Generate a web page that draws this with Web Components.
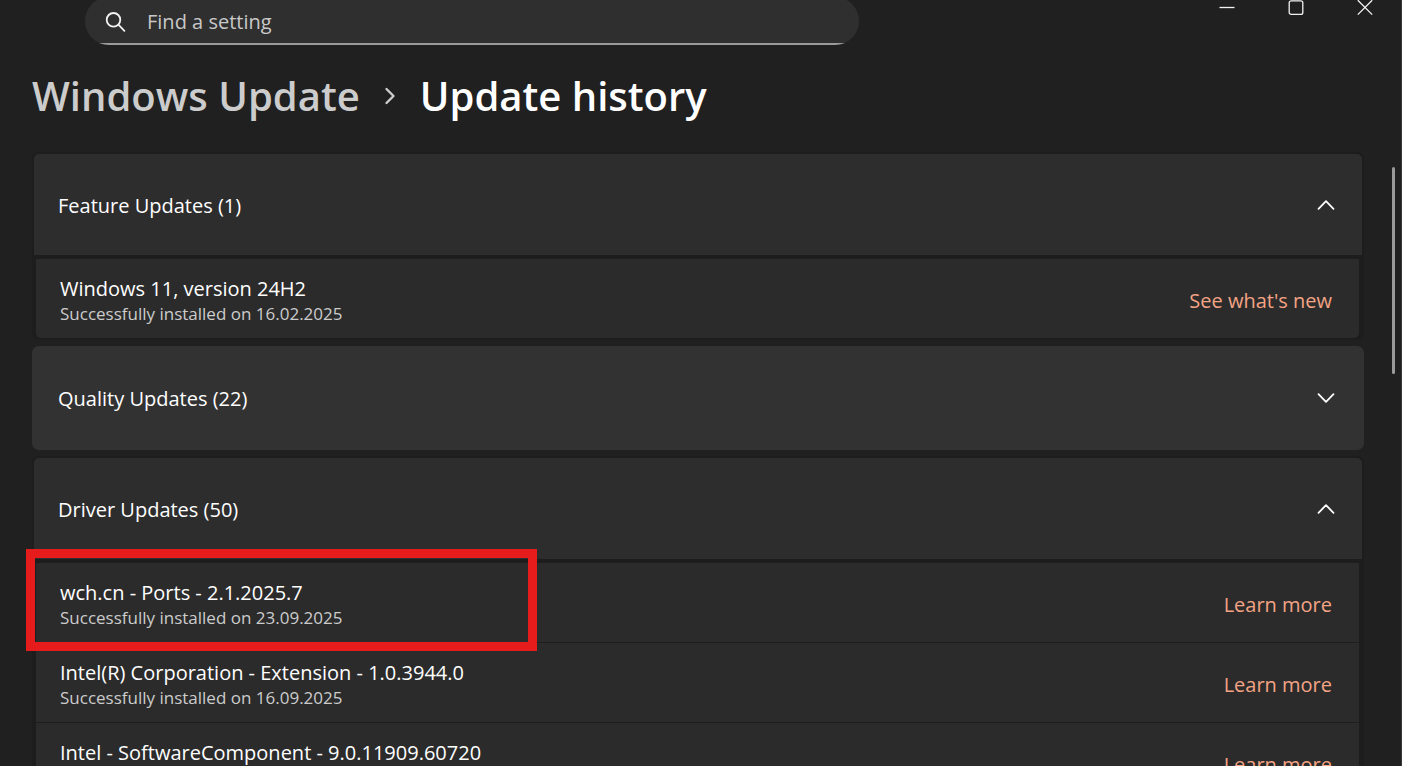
<!DOCTYPE html>
<html lang="en">
<head>
<meta charset="utf-8">
<meta name="viewport" content="width=device-width, initial-scale=1">
<title>Update history</title>
<style>
  :root {
    --color-window: #202020;
    --color-groove: #1d1d1d;
    --color-header: #2d2d2d;
    --color-hover: #323232;
    --color-row: #2b2b2b;
    --color-text: #ffffff;
    --color-muted: #cccccc;
    --color-link: #f4a384;
    --color-mark: #e61b1b;
    --font-family-base: "Open Sans", "Noto Sans", sans-serif;
  }

  body {
    margin: 0;
    background: var(--color-window);
    color: var(--color-text);
    font-family: var(--font-family-base);
  }
</style>
</head>
<body>

<settings-window>
  <settings-titlebar slot="titlebar"></settings-titlebar>
  <page-heading slot="heading" parent="Windows Update">Update history</page-heading>

  <update-group label="Feature Updates (1)" open>
    <update-item name="Windows 11, version 24H2" status="Successfully installed on 16.02.2025" action="See what's new"></update-item>
  </update-group>

  <update-group label="Quality Updates (22)"></update-group>

  <update-group label="Driver Updates (50)" open>
    <update-item name="wch.cn - Ports - 2.1.2025.7" status="Successfully installed on 23.09.2025" action="Learn more" marked></update-item>
    <update-item name="Intel(R) Corporation - Extension - 1.0.3944.0" status="Successfully installed on 16.09.2025" action="Learn more"></update-item>
    <update-item name="Intel - SoftwareComponent - 9.0.11909.60720" action="Learn more"></update-item>
  </update-group>
</settings-window>

<script>
function makeTemplate(html) {
  const template = document.createElement("template");
  template.innerHTML = html;
  return template;
}

const windowTemplate = makeTemplate(`
<style>
  :host {
    display: flex;
    flex-direction: column;
    position: relative;
    box-sizing: border-box;
    height: 100vh;
    overflow: hidden;
    border-right: 1px solid #383838;
  }

  main {
    display: flex;
    flex: 1;
    flex-direction: column;
    gap: 6px;
    min-height: 0;
    padding: 0 37px 0 32px;
    overflow: hidden;
  }

  ::slotted(*) {
    flex-shrink: 0;
  }

  .thumb {
    position: absolute;
    top: 167px;
    right: 6px;
    width: 3px;
    height: 207px;
    border-radius: 2px;
    background: #9a9a9a;
  }
</style>

<slot name="titlebar"></slot>
<slot name="heading"></slot>
<main><slot></slot></main>
<div class="thumb"></div>
`);

class SettingsWindow extends HTMLElement {
  constructor() {
    super();
    this.attachShadow({ mode: "open" });
    this.shadowRoot.append(windowTemplate.content.cloneNode(true));
  }
}

const titlebarTemplate = makeTemplate(`
<style>
  :host {
    display: flex;
    justify-content: space-between;
    height: 45px;
    padding: 0 2px 0 85px;
  }

  .search {
    display: flex;
    align-items: center;
    gap: 20px;
    box-sizing: border-box;
    flex: 0 1 774px;
    height: 48px;
    margin-top: -3px;
    padding: 1px 20px 0;
    border-radius: 24px;
    background: linear-gradient(#9a9a9a, #9a9a9a) bottom / 100% 2px no-repeat #2f2f2f;
  }

  .search svg {
    flex: none;
  }

  input {
    flex: 1;
    min-width: 0;
    padding: 0;
    border: 0;
    outline: 0;
    background: none;
    color: var(--color-text);
    font: 20px/28px var(--font-family-base);
  }

  input::placeholder {
    color: #c8c8c8;
    opacity: 1;
  }

  .controls {
    display: flex;
  }

  button {
    display: flex;
    justify-content: center;
    width: 69px;
    height: 32px;
    padding: 0;
    border: 0;
    background: none;
  }

  svg {
    display: block;
    fill: none;
    stroke: #f2f2f2;
  }
</style>

<label class="search">
  <svg width="22" height="22" viewBox="0 0 22 22" stroke-width="1.8" stroke-linecap="round" aria-hidden="true">
    <circle cx="8.5" cy="8.8" r="6.8"/>
    <path d="M13.4 13.7 19.4 19.8"/>
  </svg>
  <input type="text" placeholder="Find a setting" aria-label="Find a setting">
</label>
<div class="controls">
  <button type="button" aria-label="Minimize">
    <svg width="16" height="16" viewBox="0 0 16 16" stroke-width="1.3"><path d="M.5 7.5h15"/></svg>
  </button>
  <button type="button" aria-label="Maximize">
    <svg width="16" height="16" viewBox="0 0 16 16" stroke-width="1.3"><rect x="1.2" y=".8" width="13.6" height="13.6" rx="2"/></svg>
  </button>
  <button type="button" aria-label="Close">
    <svg width="16" height="16" viewBox="0 0 16 16" stroke-width="1.3"><path d="M.8.2l14.4 14.4M15.2.2.8 14.6"/></svg>
  </button>
</div>
`);

class SettingsTitlebar extends HTMLElement {
  constructor() {
    super();
    this.attachShadow({ mode: "open" });
    this.shadowRoot.append(titlebarTemplate.content.cloneNode(true));
  }
}

const headingTemplate = makeTemplate(`
<style>
  :host {
    display: block;
    padding: 23px 32px 28px;
  }

  nav {
    display: flex;
    align-items: center;
    gap: 22px;
    font-size: 40px;
    font-weight: 600;
    line-height: 56px;
    white-space: nowrap;
  }

  a {
    color: var(--color-muted);
    text-decoration: none;
  }

  h1 {
    margin: 0;
    font: inherit;
  }

  svg {
    flex: none;
    fill: none;
    stroke: var(--color-muted);
  }
</style>

<nav aria-label="Breadcrumb">
  <a href="#"></a>
  <svg width="16" height="18" viewBox="0 0 16 18" stroke-width="2.4" stroke-linecap="round" stroke-linejoin="round" aria-hidden="true">
    <path d="M4.5 2l7 7-7 7"/>
  </svg>
  <h1><slot></slot></h1>
</nav>
`);

class PageHeading extends HTMLElement {
  constructor() {
    super();
    this.attachShadow({ mode: "open" });
    this.shadowRoot.append(headingTemplate.content.cloneNode(true));
  }

  connectedCallback() {
    this.shadowRoot.querySelector("a").textContent = this.getAttribute("parent");
  }
}

const groupTemplate = makeTemplate(`
<style>
  :host {
    display: block;
  }

  button {
    display: flex;
    align-items: center;
    justify-content: space-between;
    box-sizing: border-box;
    width: 100%;
    height: 104px;
    padding: 0 24px;
    border: 2px solid var(--color-hover);
    border-radius: 7px;
    background: var(--color-hover);
    color: inherit;
    font: 20px/28px var(--font-family-base);
    text-align: left;
  }

  span {
    padding-top: 2px;
  }

  svg {
    flex: none;
    margin-right: 3px;
    fill: none;
    stroke: var(--color-text);
  }

  .items {
    display: none;
    flex-direction: column;
    gap: 1px;
    border: 4px solid var(--color-groove);
    border-width: 3px 5px 2px 4px;
    border-radius: 0 0 7px 7px;
    background: var(--color-groove);
  }

  :host([open]) button {
    border-color: var(--color-groove);
    border-bottom-width: 1px;
    border-radius: 7px 7px 0 0;
    background: var(--color-header);
  }

  :host([open]) svg {
    transform: rotate(180deg);
  }

  :host([open]) .items {
    display: flex;
  }
</style>

<button type="button">
  <span></span>
  <svg width="18" height="12" viewBox="0 0 18 12" stroke-width="1.8" stroke-linecap="round" stroke-linejoin="round" aria-hidden="true">
    <path d="M1.5 2.2 9 9.8l7.5-7.6"/>
  </svg>
</button>
<div class="items"><slot></slot></div>
`);

class UpdateGroup extends HTMLElement {
  constructor() {
    super();
    this.attachShadow({ mode: "open" });
    this.shadowRoot.append(groupTemplate.content.cloneNode(true));

    this.button = this.shadowRoot.querySelector("button");
  }

  static get observedAttributes() {
    return ["open"];
  }

  connectedCallback() {
    this.shadowRoot.querySelector("span").textContent = this.getAttribute("label");

    this.button.addEventListener("click", () => {
      this.toggleAttribute("open");
    });
  }

  attributeChangedCallback() {
    this.button.setAttribute("aria-expanded", this.hasAttribute("open"));
  }
}

const itemTemplate = makeTemplate(`
<style>
  :host {
    display: flex;
    align-items: center;
    justify-content: space-between;
    position: relative;
    box-sizing: border-box;
    height: 79px;
    padding: 4px 27px 0 24px;
    background: var(--color-row);
    white-space: nowrap;
  }

  :host(:last-child) {
    border-radius: 0 0 5px 5px;
  }

  .name {
    font-size: 20px;
    line-height: 26px;
  }

  .status {
    min-height: 24px;
    color: var(--color-muted);
    font-size: 17px;
    line-height: 24px;
  }

  a {
    color: var(--color-link);
    font-size: 20px;
    line-height: 28px;
    text-decoration: none;
  }

  /* red frame drawn over the marked row */
  :host([marked])::after {
    content: "";
    position: absolute;
    z-index: 1;
    top: -14px;
    bottom: -9px;
    left: -10px;
    box-sizing: border-box;
    width: 511px;
    border: 9px solid var(--color-mark);
    pointer-events: none;
  }

  :host([marked]) {
    z-index: 1;
  }
</style>

<div>
  <div class="name"></div>
  <div class="status"></div>
</div>
<a href="#"></a>
`);

class UpdateItem extends HTMLElement {
  constructor() {
    super();
    this.attachShadow({ mode: "open" });
    this.shadowRoot.append(itemTemplate.content.cloneNode(true));
  }

  connectedCallback() {
    this.shadowRoot.querySelector(".name").textContent = this.getAttribute("name");
    this.shadowRoot.querySelector(".status").textContent = this.getAttribute("status") || "";
    this.shadowRoot.querySelector("a").textContent = this.getAttribute("action");
  }
}

customElements.define("settings-window", SettingsWindow);
customElements.define("settings-titlebar", SettingsTitlebar);
customElements.define("page-heading", PageHeading);
customElements.define("update-group", UpdateGroup);
customElements.define("update-item", UpdateItem);
</script>
</body>
</html>
